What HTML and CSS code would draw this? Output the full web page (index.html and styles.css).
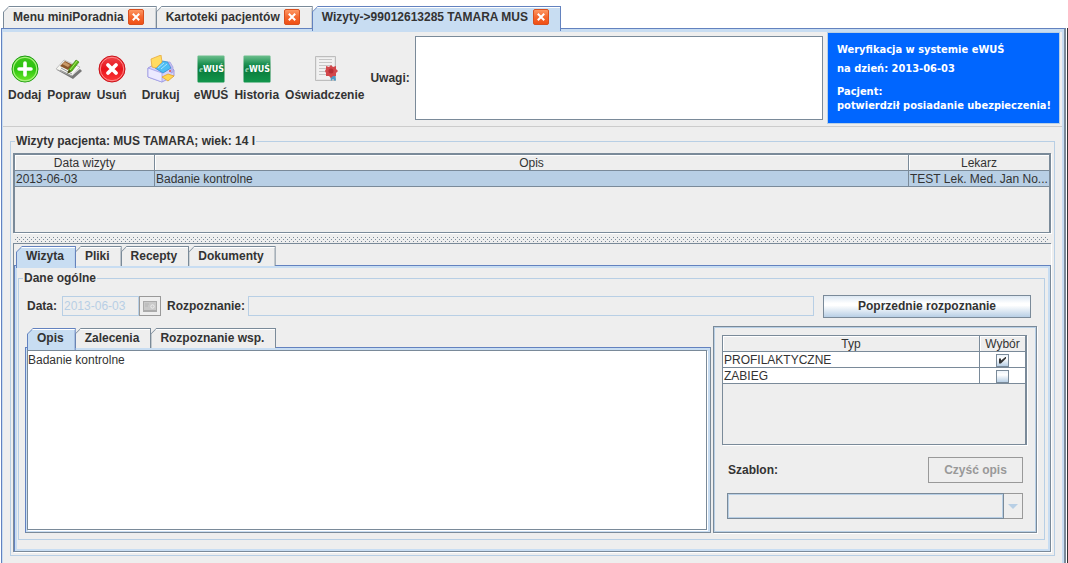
FILE: index.html
```
<!DOCTYPE html>
<html lang="pl">
<head>
<meta charset="utf-8">
<title>miniPoradnia</title>
<link rel="stylesheet" href="styles.css">
</head>
<body>
<svg class="defs" width="0" height="0" aria-hidden="true">
  <defs>
    <linearGradient id="green" x1="0" y1="0" x2="0" y2="1"><stop offset="0" stop-color="#3fc51c"/><stop offset=".5" stop-color="#2cc40f"/><stop offset="1" stop-color="#6eea2a"/></linearGradient>
    <linearGradient id="red" x1="0" y1="0" x2="0" y2="1"><stop offset="0" stop-color="#f0474d"/><stop offset=".5" stop-color="#e8131b"/><stop offset="1" stop-color="#ff3b3b"/></linearGradient>
    <linearGradient id="ewus" x1="0" y1="0" x2="0" y2="1"><stop offset="0" stop-color="#6fc08f"/><stop offset=".3" stop-color="#1f9354"/><stop offset=".5" stop-color="#0b7a3b"/><stop offset="1" stop-color="#11964c"/></linearGradient>
    <linearGradient id="orange" x1="0" y1="0" x2="0" y2="1"><stop offset="0" stop-color="#ff9a66"/><stop offset=".5" stop-color="#f4672f"/><stop offset="1" stop-color="#f04e12"/></linearGradient>
    <symbol id="close" viewBox="0 0 16 16"><rect x=".5" y=".5" width="15" height="15" rx="1.5" fill="url(#orange)" stroke="#d8501f"/><path d="M5.500 5.500l5 5M10.500 5.500l-5 5" stroke="#fff" stroke-width="2" stroke-linecap="square"/></symbol>
    <symbol id="ewus-icon" viewBox="0 0 28 28"><rect x=".5" y=".5" width="27" height="27" rx="1" fill="url(#ewus)"/><text x="2" y="17" font-family="Liberation Serif, serif" font-style="italic" font-size="9" fill="#9fd6b4">e</text><text x="6" y="17" font-family="DejaVu Sans, sans-serif" font-weight="bold" font-size="8" fill="#fff">WUŚ</text></symbol>
  </defs>
</svg>
<nav class="tabs window-tabs">
  <button class="tab">Menu miniPoradnia <svg class="close"><use href="#close"/></svg></button>
  <button class="tab">Kartoteki pacjentów <svg class="close"><use href="#close"/></svg></button>
  <button class="tab active">Wizyty-&gt;99012613285 TAMARA MUS <svg class="close"><use href="#close"/></svg></button>
</nav>
<div class="frame">
<main class="main">
  <header class="toolbar">
    <div class="actions">
      <button class="tool"><svg viewBox="0 0 28 28"><circle cx="14" cy="14" r="13" fill="url(#green)" stroke="#1d9a12"/><circle cx="14" cy="14" r="11.7" fill="none" stroke="#a6f07c" stroke-width="1.2"/><path d="M14 8v12M8 14h12" stroke="#fff" stroke-width="3.6" stroke-linecap="round"/></svg>Dodaj</button>
      <button class="tool"><svg viewBox="0 0 28 28"><path d="M2 15l2-2 14 7 7-6 2 2-9 8z" fill="#777"/><path d="M1 14L9 5l16 7-8 9z" fill="#f6f6f2" stroke="#aaa" stroke-width=".7"/><path d="M5 11l5-5 8 4-5 5z" fill="#8a572b"/><path d="M7 9l3-2 5 3-2 2z" fill="#c99a68"/><path d="M5 15l12 6M6 13l11 6" stroke="#999" stroke-width="1"/><path d="M13 18l1-4 7-9 3 2-7 9z" fill="#58b51a" stroke="#377f0a" stroke-width=".6"/><path d="M15 15l7-9" stroke="#a9ec62"/><path d="M12 19l2-4 2 1z" fill="#503b20"/></svg>Popraw</button>
      <button class="tool"><svg viewBox="0 0 28 28"><circle cx="14" cy="14" r="13" fill="url(#red)" stroke="#c9141b"/><circle cx="14" cy="14" r="11.7" fill="none" stroke="#ff8b8b" stroke-width="1"/><path d="M10 10l8 8M18 10l-8 8" stroke="#fff" stroke-width="3.8" stroke-linecap="round"/></svg>Usuń</button>
      <button class="tool print"><svg viewBox="0 0 28 28"><path d="M1 13l7-4 15 3 4 3v6l-12 6-14-5z" fill="#d4d2fa" stroke="#8d89dc" stroke-width=".8"/><path d="M1 13l14 5v9L1 22z" fill="#eceaff" stroke="#9a96e4" stroke-width=".7"/><path d="M8 13l7-7 6 1 3 6-8 5z" fill="#4fbdf2" stroke="#2284cf" stroke-width=".7"/><path d="M11 13l6-5M14 14l6-5" stroke="#a7e5ff"/><path d="M4 4l10-4 1 7-6 6-4-1z" fill="#ffdc62" stroke="#e8a93a" stroke-width=".8"/><path d="M21 7l3 5v6l2-1v-5l-3-5z" fill="#c6c4f4" stroke="#8783d6" stroke-width=".5"/><path d="M15 22l6-3 6 2-6 5z" fill="#ffd751" stroke="#e2a12c" stroke-width=".8"/><circle cx="23" cy="16" r="1" fill="#e34f4f"/></svg>Drukuj</button>
      <button class="tool"><svg><use href="#ewus-icon"/></svg>eWUŚ</button>
      <button class="tool"><svg><use href="#ewus-icon"/></svg>Historia</button>
      <button class="tool"><svg viewBox="0 0 28 28"><path d="M4.500 1.500h20v24h-20z" fill="#e6e6e6" stroke="#bdbdbd"/><path d="M6 3h17v21H6z" fill="#f1f1f1"/><path d="M8 4.500h13M8 7.500h13M8 10.500h13M8 13.500h9M8 16.500h7M8 19.500h7" stroke="#c6c6c6"/><path d="M19 20l1 6 2-2 2 2 1-1-1-5z" fill="#4e9ac6"/><path d="M20 10l2 2 3-1v3l2 2-2 2v3l-3 0-2 2-2-2-3 0 0-3-1-2 1-2 0-3 3 1z" fill="#d2474b"/><circle cx="20" cy="16" r="2.500" fill="#b82e35"/></svg>Oświadczenie</button>
    </div>
    <label for="notes">Uwagi:</label>
    <textarea id="notes" class="notes"></textarea>
    <aside class="verify">
      <p>Weryfikacja w systemie eWUŚ</p>
      <p>na dzień: 2013-06-03</p>
      <p class="patient">Pacjent:<br>potwierdził posiadanie ubezpieczenia!</p>
    </aside>
  </header>

  <fieldset class="group visits">
    <legend>Wizyty pacjenta: MUS TAMARA; wiek: 14 l</legend>
    <div class="scroll visits-scroll">
      <table>
        <colgroup><col class="col-date"><col><col class="col-doctor"></colgroup>
        <thead><tr><th>Data wizyty</th><th>Opis</th><th>Lekarz</th></tr></thead>
        <tbody><tr class="selected"><td>2013-06-03</td><td>Badanie kontrolne</td><td>TEST Lek. Med. Jan No...</td></tr></tbody>
      </table>
    </div>
    <div class="divider"></div>
    <section class="details">
      <nav class="tabs sub-tabs">
        <button class="tab active">Wizyta</button>
        <button class="tab">Pliki</button>
        <button class="tab">Recepty</button>
        <button class="tab">Dokumenty</button>
      </nav>
      <div class="pane">
        <fieldset class="group general">
          <legend>Dane ogólne</legend>
          <div class="row">
            <label for="date">Data:</label>
            <input id="date" class="field date" value="2013-06-03" disabled>
            <button class="pick" aria-label="Kalendarz" disabled><svg viewBox="0 0 14 11"><path d="M0 0h14v11H0z" fill="#aaa"/><path d="M1 1h12v8H1z" fill="#c9c9c9"/><path d="M2 3h4M2 5h3" stroke="#b5b5b5"/><circle cx="9.500" cy="5.500" r="1.700" fill="none" stroke="#eee"/></svg></button>
            <label for="diagnosis" class="diagnosis-label">Rozpoznanie:</label>
            <input id="diagnosis" class="field diagnosis" disabled>
            <button class="previous">Poprzednie rozpoznanie</button>
          </div>
          <div class="columns">
            <section class="editor">
              <nav class="tabs editor-tabs">
                <button class="tab active">Opis</button>
                <button class="tab">Zalecenia</button>
                <button class="tab">Rozpoznanie wsp.</button>
              </nav>
              <div class="editor-pane"><textarea aria-label="Opis">Badanie kontrolne</textarea></div>
            </section>
            <section class="types">
              <div class="scroll types-scroll">
                <table>
                  <colgroup><col><col class="col-check"></colgroup>
                  <thead><tr><th>Typ</th><th>Wybór</th></tr></thead>
                  <tbody>
                    <tr><td><label for="prof">PROFILAKTYCZNE</label></td><td class="check"><input type="checkbox" id="prof" checked></td></tr>
                    <tr><td><label for="zab">ZABIEG</label></td><td class="check"><input type="checkbox" id="zab"></td></tr>
                  </tbody>
                </table>
              </div>
              <div class="template">
                <label for="template">Szablon:</label>
                <button class="clear" disabled>Czyść opis</button>
              </div>
              <div class="combo">
                <select id="template" disabled><option></option></select>
                <span class="arrow"></span>
              </div>
            </section>
          </div>
        </fieldset>
      </div>
    </section>
  </fieldset>
</main>
</div>
</body>
</html>
```
FILE: styles.css
```
:root {
  --gray: #7a8a99;
  --blue: #6382bf;
  --light: #b8cfe5;
  --tab: #c8ddf2;
  --bg: #eeeeee;
  --text: #333333;
}
* { box-sizing: border-box; }
body {
  margin: 0;
  min-height: 100vh;
  display: flex;
  flex-direction: column;
  background: #fff;
  color: var(--text);
  font: bold 12px/14px "Liberation Sans", Arial, sans-serif;
}
.defs { position: absolute; }
button, input, textarea, select { font: inherit; color: inherit; border-radius: 0; margin: 0; }
p { margin: 0; }

/* Tabs with a cut upper left corner */
.tabs { display: flex; align-items: flex-start; }
.tab {
  position: relative;
  isolation: isolate;
  display: flex;
  align-items: center;
  gap: 4px;
  height: 20px;
  padding: 0 12px 0 10px;
  margin-right: -1px;
  border: 0;
  background: var(--gray);
  white-space: nowrap;
  clip-path: polygon(0 6px, 6px 0, 100% 0, 100% 100%, 0 100%);
}
.tab::before {
  content: "";
  position: absolute;
  z-index: -1;
  inset: 1px 1px 0;
  background: var(--bg);
  box-shadow: inset 0 1px #fff;
  clip-path: polygon(0 5px, 5px 0, 100% 0, 100% 100%, 0 100%);
}
.tab.active { z-index: 1; background: var(--blue); }
.tab.active::before { background: var(--tab); }
.window-tabs { height: 28px; padding: 6px 0 0 3px; }
.window-tabs .tab { height: 22px; padding: 0 13px 0 10px; }
.window-tabs .tab.active { height: 25px; padding: 0 12px 3px 10px; gap: 5px; }
.close { width: 16px; height: 16px; }

.frame {
  flex: 1;
  display: flex;
  padding: 0 1px;
  border-right: 1px solid #333;
}
.main {
  flex: 1;
  min-width: 0;
  border: solid var(--blue);
  border-width: 1px 2px 0 1px;
  border-right-color: var(--gray);
  background: var(--bg);
  box-shadow: inset 1px 3px var(--tab), inset -2px 0 var(--tab);
  padding: 3px 2px 7px 1px;
}

.toolbar {
  display: flex;
  align-items: center;
  height: 95px;
  padding: 0 2px 2px 5px;
  border-bottom: 1px solid #ccc;
}
.actions { display: flex; gap: 6px; margin-right: 6px; }
.tool {
  display: flex;
  flex-direction: column;
  align-items: center;
  gap: 5px;
  padding: 0;
  border: 0;
  background: none;
}
.tool svg { width: 28px; height: 28px; }
.print { margin: 0 8px 0 9px; }
.notes {
  flex: 1;
  min-width: 0;
  height: 84px;
  margin: 0 4px 0 5px;
  border: 1px solid var(--gray);
  background: #fff;
  resize: none;
  font-weight: normal;
}
.verify {
  width: 233px;
  height: 92px;
  padding: 7px 9px;
  border: 1px solid var(--light);
  background: #0066ff;
  color: #fff;
  font: bold 11px/19px "DejaVu Sans Condensed", "DejaVu Sans", sans-serif;
  white-space: nowrap;
}
.verify .patient { margin-top: 7px; line-height: 14px; }

.group { min-width: 0; margin: 0; border: 1px solid var(--light); }
.group > legend { padding: 0 1px; margin-left: 2px; }
.visits { margin: 7px 7px 0; padding: 5px 3px 3px 2px; }
.scroll {
  border: 1px solid var(--gray);
  box-shadow: 1px 1px #fff;
}
.visits-scroll { height: 80px; border-width: 2px 2px 1px; }
table {
  width: 100%;
  table-layout: fixed;
  border-collapse: separate;
  border-spacing: 0;
  font-weight: normal;
}
th, td {
  height: 16px;
  padding: 1px 1px 0;
  border: solid var(--gray);
  border-width: 0 1px 1px 0;
  line-height: 14px;
  text-align: left;
  white-space: nowrap;
  overflow: hidden;
}
th { font-weight: normal; text-align: center; box-shadow: inset 1px 1px #fff; }
th:last-child, td:last-child { border-right: 0; }
.selected { background: var(--light); }
.col-date { width: 140px; }
.col-doctor { width: 140px; }

.divider {
  height: 10px;
  margin: 0 2px;
  padding: 3px 0 1px;
  background:
    conic-gradient(at 1px 1px, transparent 75%, var(--gray) 0) 2px 0 / 4px 4px,
    conic-gradient(at 1px 1px, transparent 75%, var(--gray) 0) 0 2px / 4px 4px;
  background-clip: content-box;
}
.details {
  border: solid var(--gray);
  border-width: 1px 0 0 1px;
  box-shadow: 1px 1px #fff;
  padding-top: 2px;
}
.sub-tabs { height: 19px; padding-left: 2px; }
.sub-tabs .tab.active, .editor-tabs .tab.active { height: 22px; padding-bottom: 2px; }
.pane {
  border: 1px solid var(--gray);
  border-top-color: var(--blue);
  border-left-color: var(--blue);
  box-shadow: inset 0 0 0 2px var(--tab);
  padding: 5px 5px 11px 3px;
}
.general { padding: 10px 7px 6px 6px; }
.general > legend { margin-left: -2px; }
.row { display: flex; align-items: center; height: 24px; padding: 0 6px 2px 2px; }
.field {
  height: 20px;
  padding: 0 1px;
  border: 1px solid var(--light);
  background: var(--bg);
  color: var(--light);
}
.date { width: 77px; margin-left: 5px; font-weight: normal; }
.pick {
  display: flex;
  align-items: center;
  justify-content: center;
  width: 22px;
  height: 20px;
  padding: 0;
  border: 1px solid #999;
  background: var(--bg);
}
.pick svg { width: 14px; height: 11px; }
.diagnosis-label { margin: 0 3px 0 6px; }
.diagnosis { flex: 1; min-width: 0; }
.previous {
  width: 208px;
  height: 23px;
  margin-left: 9px;
  padding: 0;
  border: 1px solid var(--gray);
  background: linear-gradient(#dde8f3, #fff 35%, #fff 45%, #b8cfe5);
}
.columns { display: flex; gap: 2px; margin-top: 7px; height: 207px; }
.editor { flex: 1; min-width: 0; display: flex; flex-direction: column; padding-top: 2px; }
.editor-tabs { height: 19px; padding-left: 2px; }
.editor-pane {
  flex: 1;
  display: flex;
  padding: 2px 3px 2px 1px;
  border: 1px solid var(--gray);
  border-top-color: var(--blue);
  border-left-color: var(--blue);
  background: var(--tab);
}
.editor-pane textarea {
  flex: 1;
  padding: 2px 0;
  border: 1px solid var(--gray);
  background: #fff;
  box-shadow: 1px 1px #fff;
  font-weight: normal;
  resize: none;
}
.types {
  width: 324px;
  padding: 8px 8px 0;
  border: 1px solid var(--gray);
  box-shadow: inset 0 0 0 1px var(--light), 1px 1px #fff;
}
.types-scroll { height: 110px; margin-right: 1px; border-right-width: 2px; }
.types tbody { background: #fff; }
.col-check { width: 45px; }
td.check { text-align: center; }
td.check input {
  appearance: none;
  display: block;
  width: 13px;
  height: 13px;
  margin: 0 auto;
  border: 1px solid var(--gray);
  background: linear-gradient(#eef4fa, #fff 35%, #b8cfe5);
}
td.check input:checked::after {
  content: "";
  display: block;
  width: 7px;
  height: 7px;
  margin: 2px;
  background: var(--text);
  clip-path: polygon(0 30%, 28% 30%, 28% 58%, 100% 0, 100% 28%, 28% 100%, 0 100%);
}
.template {
  display: flex;
  align-items: center;
  justify-content: space-between;
  margin: 12px 5px 10px 6px;
}
.clear {
  width: 95px;
  height: 26px;
  padding: 0;
  border: 1px solid #999;
  background: var(--bg);
  color: #999;
}
.combo { display: flex; height: 26px; margin: 0 5px; }
.combo select {
  appearance: none;
  flex: 1;
  min-width: 0;
  border: 1px solid var(--gray);
  outline: 1px solid var(--light);
  outline-offset: -2px;
  background: var(--bg);
  opacity: 1;
}
.arrow {
  display: flex;
  align-items: center;
  justify-content: center;
  width: 19px;
  border: 1px solid #999;
  border-left: 0;
}
.arrow::before {
  content: "";
  border: solid transparent;
  border-width: 5px 5px 0;
  border-top-color: var(--light);
}
```
